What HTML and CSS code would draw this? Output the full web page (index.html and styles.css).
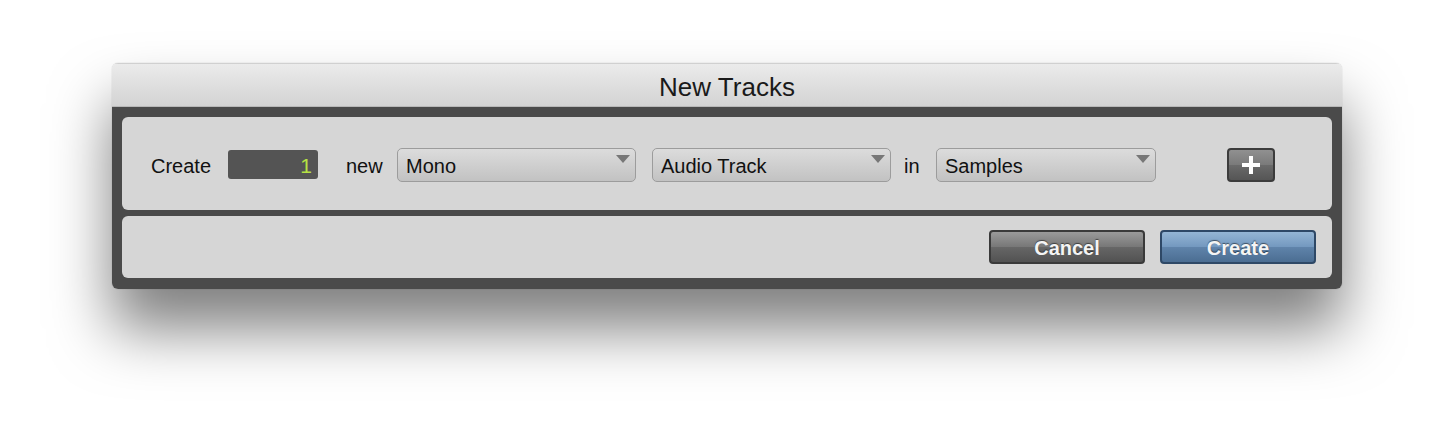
FILE: index.html
```html
<!DOCTYPE html>
<html>
<head>
  <title>New Tracks</title>
  <link rel="stylesheet" href="styles.css">
</head>
<body>

<div class="dialog">
  <div class="titlebar">New Tracks</div>
  <div class="body">
    <div class="panel tracks">
      <span class="label create-label">Create</span>
      <div class="count">1</div>
      <span class="label new">new</span>
      <div class="select mono">Mono</div>
      <div class="select kind">Audio Track</div>
      <span class="label in">in</span>
      <div class="select base">Samples</div>
      <button class="plus">
        <svg width="18" height="18" viewBox="0 0 18 18">
          <rect x="7" y="0" width="4" height="18" fill="#fff"/>
          <rect x="0" y="7" width="18" height="4" fill="#fff"/>
        </svg>
      </button>
    </div>
    <div class="panel actions">
      <button class="btn cancel">Cancel</button>
      <button class="btn create">Create</button>
    </div>
  </div>
</div>

</body>
</html>
```

FILE: styles.css
```css
* {
  margin: 0;
  padding: 0;
  box-sizing: border-box;
}

html, body {
  height: 100%;
}

body {
  font-family: "Liberation Sans", Arial, sans-serif;
  background-color: #fff;
  padding: 63px 0 0 112px;
}

.dialog {
  width: 1230px;
  border-radius: 6px;
  overflow: hidden;
  box-shadow: 0px 40px 60px rgba(0, 0, 0, 0.5), 0 0 1px rgba(0, 0, 0, 0.35);
}

.titlebar {
  height: 44px;
  background: linear-gradient(#ebebeb, #d3d3d3);
  border-top: 1px solid #d0d0d0;
  border-bottom: 1px solid #b8b8b8;
  text-align: center;
  font-size: 26px;
  line-height: 46px;
  color: #1a1a1a;
}

.body {
  background-color: #4a4a4a;
  padding: 10px 10px 11px 10px;
  display: flex;
  flex-direction: column;
  gap: 6px;
}

.panel {
  background-color: #d6d6d6;
  border-radius: 6px;
  display: flex;
  align-items: center;
}

.tracks {
  height: 93px;
  padding-left: 29px;
  padding-top: 2px;
}

.actions {
  height: 62px;
  justify-content: flex-end;
  padding-right: 16px;
  gap: 15px;
}

.label {
  font-size: 20px;
  color: #111;
  padding-top: 3px;
}

.create-label {
  width: 77px;
}

.count {
  width: 90px;
  height: 29px;
  background-color: #545454;
  border-radius: 3px;
  color: #b6e244;
  font-size: 21px;
  line-height: 31px;
  text-align: right;
  padding-right: 6px;
}

.new {
  width: 79px;
  padding-left: 28px;
}

.select {
  height: 34px;
  border: 1px solid #9c9c9c;
  border-radius: 5px;
  background: linear-gradient(#dcdcdc, #c2c2c2);
  font-size: 20px;
  line-height: 35px;
  padding-left: 8px;
  color: #111;
  position: relative;
}

.select::after {
  content: "";
  position: absolute;
  right: 5px;
  top: 6px;
  border-left: 7px solid transparent;
  border-right: 7px solid transparent;
  border-top: 8px solid #777;
}

.mono {
  width: 239px;
}

.kind {
  width: 239px;
  margin-left: 16px;
}

.in {
  width: 45px;
  padding-left: 13px;
}

.base {
  width: 220px;
}

.plus {
  width: 48px;
  height: 34px;
  margin-left: 71px;
  border: 2px solid #3c3c3c;
  border-radius: 4px;
  background: linear-gradient(#909090, #7a7a7a 50%, #6a6a6a 51%, #555);
  display: flex;
  align-items: center;
  justify-content: center;
}

.btn {
  width: 156px;
  height: 34px;
  border-radius: 4px;
  font-family: "Liberation Sans", Arial, sans-serif;
  font-size: 20px;
  font-weight: bold;
  color: #f4f4f4;
  padding-top: 2px;
  text-shadow: 0 -1px 1px rgba(0, 0, 0, 0.5);
}

.cancel {
  border: 2px solid #3a3a3a;
  background: linear-gradient(#9a9a9a, #777 50%, #666 51%, #525252);
}

.create {
  border: 2px solid #2e4866;
  background: linear-gradient(#94b5d4, #7398bf 50%, #5f83aa 51%, #4b6d92);
}
```
